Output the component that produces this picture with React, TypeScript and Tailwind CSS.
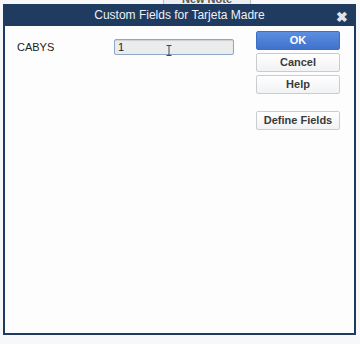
import React from 'react'

// Diálogo "Custom Fields" estilo QuickBooks
const btn =
  'h-[19px] w-[84px] rounded-[2px] border border-[#c9ccd1] bg-gradient-to-b from-white to-[#f1f2f4] text-[11px] font-bold text-[#3a3a3a] flex items-center justify-center'

export default function App() {
  return (
    <div className="relative h-[344px] w-[360px] overflow-hidden bg-[#f7f8fa] font-['Liberation_Sans',Arial,sans-serif]">
      {/* Pestaña de fondo */}
      <div className="absolute left-[163px] top-[-7px] h-[12px] w-[88px] border border-[#b9bdc4] bg-[#eceef1] text-center text-[11px] leading-[11px] font-bold text-[#555]">
        New Note
      </div>

      <div className="absolute left-[3px] top-[4px] flex h-[331px] w-[353px] flex-col border-2 border-t-0 border-[#1d3a5f] bg-[#fdfdfe]">
        <div className="relative -mx-[2px] flex h-[22px] items-center justify-center bg-[#1f3b60] text-[12px] text-[#eef1f5]">
          Custom Fields for Tarjeta Madre
          <span className="absolute right-[8px] top-[3px] text-[14px] font-bold text-[#dfe4ea]">✖</span>
        </div>

        <div className="flex flex-1 px-[12px] pt-[5px]">
          <div className="flex h-[20px] flex-1 items-center pt-[12px]">
            <span className="w-[97px] text-[11px] text-[#222]">CABYS</span>
            <div className="relative flex h-[16px] w-[120px] items-center rounded-[2px] border border-[#8ea6c8] bg-[#ebecee] px-[3px] text-[11px] text-[#222] shadow-[inset_0_1px_1px_rgba(0,0,0,0.12)]">
              1
              {/* cursor I-beam */}
              <svg className="absolute left-[51px] top-[5px]" width="6" height="11" viewBox="0 0 6 11">
                <path d="M0.5 0.5h5M0.5 10.5h5M3 0.5v10" stroke="#444" strokeWidth="1" fill="none" />
              </svg>
            </div>
          </div>

          <div className="mr-[2px] flex flex-col gap-[3px]">
            <div className="flex h-[19px] w-[84px] items-center justify-center rounded-[2px] border border-[#3d6fc4] bg-gradient-to-b from-[#5c8ee0] to-[#3f72cc] text-[11px] font-bold text-white">
              OK
            </div>
            <div className={btn}>Cancel</div>
            <div className={btn}>Help</div>
            <div className={`${btn} mt-[14px]`}>Define Fields</div>
          </div>
        </div>
      </div>
    </div>
  )
}
